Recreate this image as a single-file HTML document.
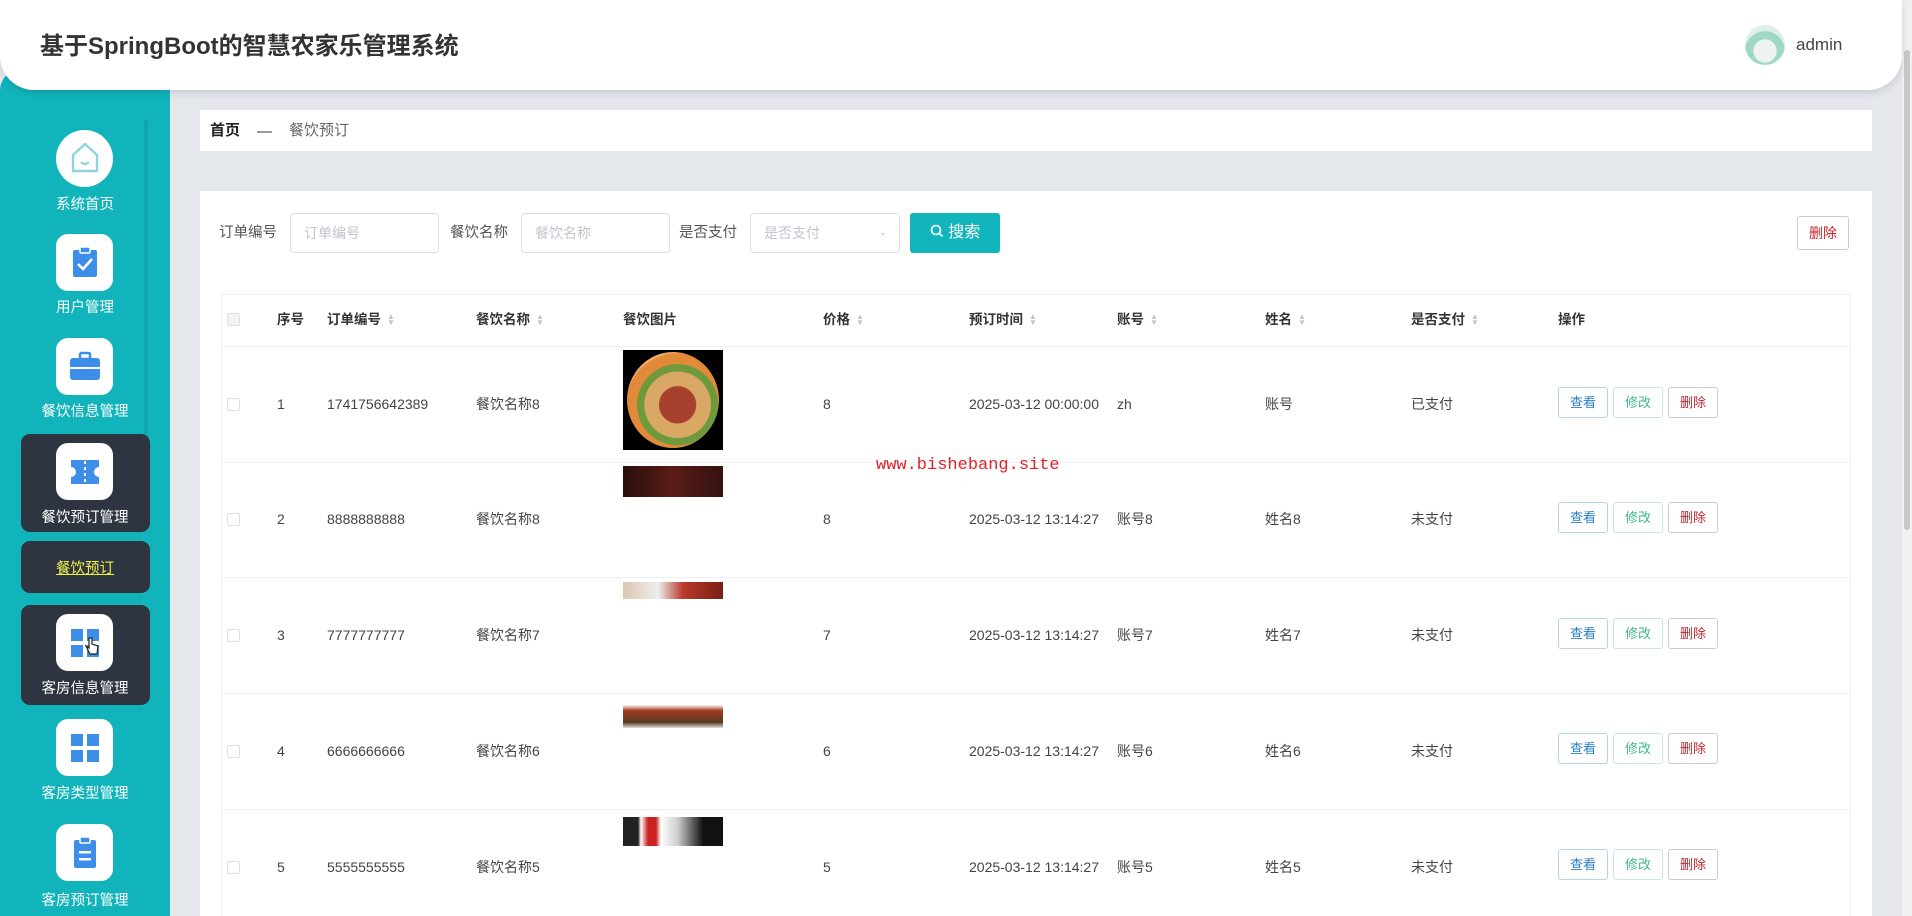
<!DOCTYPE html>
<html><head><meta charset="utf-8">
<style>
*{margin:0;padding:0;box-sizing:border-box}
body{width:1912px;height:916px;overflow:hidden;background:#e4e8ec;font-family:"Liberation Sans","Noto Sans CJK SC",sans-serif;color:#333;position:relative}
.abs{position:absolute}
#hdr{left:0;top:0;width:1902px;height:90px;background:#fff;border-radius:0 0 34px 34px;box-shadow:0 3px 8px rgba(0,0,0,.12);z-index:3}
#side{left:0;top:70px;width:170px;height:846px;background:#12b4bc;border-top-left-radius:20px}
.sb{position:absolute;right:0;top:0;width:10px;height:916px;background:#f0f0f0}
.ic{position:absolute;left:36px;width:57px;height:57px;background:#fff;border-radius:12px}
.dark{position:absolute;left:21px;width:129px;background:#2e3440;border-radius:9px}
.lab{position:absolute;left:0;width:170px;text-align:center;color:#fff;font-size:14.5px;line-height:20px}
.box{background:#fff}
.inp{position:absolute;top:213px;height:40px;border:1px solid #dcdfe6;border-radius:4px;background:#fff;color:#c0c4cc;font-size:14px;line-height:38px;padding-left:13px}
.lbl{position:absolute;top:223px;font-size:14.5px;color:#555;line-height:20px}
.hd{position:absolute;top:310px;font-size:13.5px;font-weight:bold;color:#333;line-height:20px}
.sort{display:inline-block;margin-left:6px;vertical-align:middle;color:#c0c4cc;font-size:8px;line-height:6px}
.cell{position:absolute;font-size:14px;color:#444;line-height:20px}
.btn{position:absolute;height:31px;width:50px;border:1px solid #ccc;border-radius:3px;font-size:13px;text-align:center;line-height:29px;background:#fff}
.cb{position:absolute;left:227px;width:13px;height:13px;border:1px solid #dcdfe6;border-radius:2px}
.rowline{position:absolute;left:221px;width:1630px;height:1px;background:#eef0f3}
</style></head><body>
<div id="hdr" class="abs">
  <div class="abs" style="left:40px;top:31px;font-size:24px;font-weight:bold;color:#333;line-height:32px">基于SpringBoot的智慧农家乐管理系统</div>
  <div class="abs" style="left:1745px;top:25px;width:40px;height:40px;border-radius:50%;background:radial-gradient(circle at 50% 65%,#eef3f1 0 35%,#9fd9c5 36% 60%,#dfeee8 61%)"></div>
  <div class="abs" style="left:1796px;top:35px;font-size:17px;color:#444;line-height:20px">admin</div>
</div>
<div class="sb"></div>
<div class="abs" style="right:2px;top:50px;width:6px;height:480px;background:#c8c8c8;border-radius:3px"></div>

<div id="side" class="abs"></div>
<div class="abs" style="left:144px;top:120px;width:4px;height:355px;background:rgba(0,0,0,.08);border-radius:2px"></div>
<div class="abs" style="left:56px;top:130px;width:57px;height:57px;border-radius:50%;background:#fff"></div>
<svg class="abs" style="left:68px;top:140px" width="34" height="36" viewBox="0 0 34 36"><path d="M5 15 L17 4 L29 15 V31 H5 Z" fill="none" stroke="#8fd3dc" stroke-width="2.4" stroke-linejoin="round"/><path d="M13 22 q4 4 8 0" fill="none" stroke="#8fd3dc" stroke-width="2.2"/></svg>
<div class="lab" style="top:195px">系统首页</div>

<div class="ic" style="top:234px;left:56px"></div>
<svg class="abs" style="left:70px;top:245px" width="30" height="34" viewBox="0 0 30 34"><rect x="3" y="5" width="24" height="27" rx="2" fill="#3d8ee8"/><rect x="10" y="2" width="10" height="6" rx="1" fill="#3d8ee8" stroke="#fff" stroke-width="1.5"/><path d="M8 19 l5 5 l9 -10" fill="none" stroke="#fff" stroke-width="2.6"/></svg>
<div class="lab" style="top:298px">用户管理</div>

<div class="ic" style="top:338px;left:56px"></div>
<svg class="abs" style="left:68px;top:350px" width="34" height="32" viewBox="0 0 34 32"><rect x="12" y="3" width="10" height="6" rx="1.5" fill="none" stroke="#3d8ee8" stroke-width="2.5"/><rect x="2" y="8" width="30" height="22" rx="3" fill="#3d8ee8"/><rect x="2" y="17" width="30" height="2" fill="#fff"/></svg>
<div class="lab" style="top:402px">餐饮信息管理</div>

<div class="dark" style="top:434px;height:98px"></div>
<div class="ic" style="top:443px;left:56px"></div>
<svg class="abs" style="left:68px;top:457px" width="34" height="30" viewBox="0 0 34 30"><path d="M3 3 H31 V10 a5 5 0 0 0 0 10 V27 H3 V20 a5 5 0 0 0 0 -10 Z" fill="#3d8ee8"/><path d="M17 4 V26" stroke="#fff" stroke-width="2" stroke-dasharray="3 3"/></svg>
<div class="lab" style="top:508px">餐饮预订管理</div>

<div class="dark" style="top:541px;height:52px"></div>
<div class="lab" style="top:559px;color:#f2f24a;text-decoration:underline">餐饮预订</div>

<div class="dark" style="top:605px;height:100px"></div>
<div class="ic" style="top:614px;left:56px"></div>
<svg class="abs" style="left:70px;top:628px" width="30" height="30" viewBox="0 0 30 30"><rect x="1" y="1" width="12" height="12" fill="#3d8ee8"/><rect x="17" y="1" width="12" height="12" fill="#3d8ee8"/><rect x="1" y="17" width="12" height="12" fill="#3d8ee8"/><rect x="17" y="17" width="12" height="12" fill="#3d8ee8"/><path d="M19 10 v10 l-3 -2 l4 8 h7 l1 -8 l-6 -2 v-6 z" fill="#fff" stroke="#222" stroke-width="1.2"/></svg>
<div class="lab" style="top:679px">客房信息管理</div>

<div class="ic" style="top:719px;left:56px"></div>
<svg class="abs" style="left:70px;top:733px" width="30" height="30" viewBox="0 0 30 30"><rect x="1" y="1" width="12" height="12" fill="#3d8ee8"/><rect x="17" y="1" width="12" height="12" fill="#3d8ee8"/><rect x="1" y="17" width="12" height="12" fill="#3d8ee8"/><rect x="17" y="17" width="12" height="12" fill="#3d8ee8"/></svg>
<div class="lab" style="top:784px">客房类型管理</div>

<div class="ic" style="top:824px;left:56px"></div>
<svg class="abs" style="left:72px;top:836px" width="26" height="34" viewBox="0 0 26 34"><rect x="2" y="4" width="22" height="28" rx="2" fill="#3d8ee8"/><rect x="8" y="1" width="10" height="6" rx="1" fill="#3d8ee8" stroke="#fff" stroke-width="1.5"/><rect x="7" y="15" width="12" height="2.5" fill="#fff"/><rect x="7" y="22" width="12" height="2.5" fill="#fff"/></svg>
<div class="lab" style="top:891px">客房预订管理</div>

<div class="abs box" style="left:200px;top:110px;width:1672px;height:41px"></div>
<div class="abs" style="left:210px;top:121px;font-size:15px;font-weight:bold;color:#222;line-height:20px">首页</div>
<div class="abs" style="left:257px;top:121px;font-size:15px;color:#333;line-height:22px">—</div>
<div class="abs" style="left:289px;top:121px;font-size:15px;color:#666;line-height:20px">餐饮预订</div>

<div class="abs box" style="left:200px;top:191px;width:1672px;height:725px"></div>
<div class="lbl" style="left:219px">订单编号</div>
<div class="inp" style="left:290px;width:149px">订单编号</div>
<div class="lbl" style="left:450px">餐饮名称</div>
<div class="inp" style="left:521px;width:149px">餐饮名称</div>
<div class="lbl" style="left:679px">是否支付</div>
<div class="inp" style="left:750px;width:150px">是否支付<span style="position:absolute;right:12px;font-size:10px">⌄</span></div>
<div class="abs" style="left:910px;top:213px;width:90px;height:40px;background:#13b5bd;border-radius:3px;color:#fff;font-size:16px;line-height:40px;text-align:center">
<svg width="14" height="14" viewBox="0 0 14 14" style="vertical-align:-1px"><circle cx="6" cy="6" r="4.5" fill="none" stroke="#fff" stroke-width="1.6"/><path d="M9.5 9.5 L12.5 12.5" stroke="#fff" stroke-width="1.6"/></svg> 搜索</div>
<div class="btn" style="left:1797px;top:216px;width:52px;height:34px;line-height:32px;color:#c0262d;border-color:#ccc;font-size:14px">删除</div>

<div class="abs" style="left:221px;top:294px;width:1630px;height:622px;border:1px solid #eef0f3;border-bottom:none"></div>
<div class="cb" style="top:313px;background:#f2f2f2"></div>
<div class="hd" style="left:277px">序号</div>
<div class="hd" style="left:327px">订单编号<span class="sort">▲<br>▼</span></div>
<div class="hd" style="left:476px">餐饮名称<span class="sort">▲<br>▼</span></div>
<div class="hd" style="left:623px">餐饮图片</div>
<div class="hd" style="left:823px">价格<span class="sort">▲<br>▼</span></div>
<div class="hd" style="left:969px">预订时间<span class="sort">▲<br>▼</span></div>
<div class="hd" style="left:1117px">账号<span class="sort">▲<br>▼</span></div>
<div class="hd" style="left:1265px">姓名<span class="sort">▲<br>▼</span></div>
<div class="hd" style="left:1411px">是否支付<span class="sort">▲<br>▼</span></div>
<div class="hd" style="left:1558px">操作</div>
<div class="rowline" style="top:346px"></div>
<div class="rowline" style="top:462px"></div>
<div class="rowline" style="top:577px"></div>
<div class="rowline" style="top:693px"></div>
<div class="rowline" style="top:809px"></div>

<div class="abs" style="left:623px;top:350px;width:100px;height:100px;background:#000"><div style="position:absolute;left:4px;top:2px;width:92px;height:96px;border-radius:50%;background:radial-gradient(circle at 55% 55%,#a8402e 0 25%,#d9a865 26% 45%,#6f9a3c 46% 55%,#e08a3a 56% 70%,#f2a86b 71%)"></div></div>
<div class="abs" style="left:623px;top:466px;width:100px;height:31px;background:linear-gradient(90deg,#2a0e0b,#5a1d16 50%,#341210)"></div>
<div class="abs" style="left:623px;top:582px;width:100px;height:17px;background:linear-gradient(90deg,#d9c7b0,#eee 35%,#b83a2a 60%,#7a1e15)"></div>
<div class="abs" style="left:623px;top:699px;width:100px;height:29px;background:linear-gradient(180deg,#fff 0 20%,#a33a20 40%,#5a3a22 80%,#ddd)"></div>
<div class="abs" style="left:623px;top:817px;width:100px;height:29px;background:linear-gradient(90deg,#222 0 15%,#fff 18%,#c22 25% 33%,#fff 38%,#ccc 55%,#111 80%)"></div>

<div class="cb" style="top:398px"></div><div class="cell" style="left:277px;top:394px">1</div><div class="cell" style="left:327px;top:394px">1741756642389</div><div class="cell" style="left:476px;top:394px">餐饮名称8</div><div class="cell" style="left:823px;top:394px">8</div><div class="cell" style="left:969px;top:394px">2025-03-12 00:00:00</div><div class="cell" style="left:1117px;top:394px">zh</div><div class="cell" style="left:1265px;top:394px">账号</div><div class="cell" style="left:1411px;top:394px">已支付</div>
<div class="cb" style="top:513px"></div><div class="cell" style="left:277px;top:509px">2</div><div class="cell" style="left:327px;top:509px">8888888888</div><div class="cell" style="left:476px;top:509px">餐饮名称8</div><div class="cell" style="left:823px;top:509px">8</div><div class="cell" style="left:969px;top:509px">2025-03-12 13:14:27</div><div class="cell" style="left:1117px;top:509px">账号8</div><div class="cell" style="left:1265px;top:509px">姓名8</div><div class="cell" style="left:1411px;top:509px">未支付</div>
<div class="cb" style="top:629px"></div><div class="cell" style="left:277px;top:625px">3</div><div class="cell" style="left:327px;top:625px">7777777777</div><div class="cell" style="left:476px;top:625px">餐饮名称7</div><div class="cell" style="left:823px;top:625px">7</div><div class="cell" style="left:969px;top:625px">2025-03-12 13:14:27</div><div class="cell" style="left:1117px;top:625px">账号7</div><div class="cell" style="left:1265px;top:625px">姓名7</div><div class="cell" style="left:1411px;top:625px">未支付</div>
<div class="cb" style="top:745px"></div><div class="cell" style="left:277px;top:741px">4</div><div class="cell" style="left:327px;top:741px">6666666666</div><div class="cell" style="left:476px;top:741px">餐饮名称6</div><div class="cell" style="left:823px;top:741px">6</div><div class="cell" style="left:969px;top:741px">2025-03-12 13:14:27</div><div class="cell" style="left:1117px;top:741px">账号6</div><div class="cell" style="left:1265px;top:741px">姓名6</div><div class="cell" style="left:1411px;top:741px">未支付</div>
<div class="cb" style="top:861px"></div><div class="cell" style="left:277px;top:857px">5</div><div class="cell" style="left:327px;top:857px">5555555555</div><div class="cell" style="left:476px;top:857px">餐饮名称5</div><div class="cell" style="left:823px;top:857px">5</div><div class="cell" style="left:969px;top:857px">2025-03-12 13:14:27</div><div class="cell" style="left:1117px;top:857px">账号5</div><div class="cell" style="left:1265px;top:857px">姓名5</div><div class="cell" style="left:1411px;top:857px">未支付</div>

<div class="btn" style="left:1558px;top:387px;color:#2a7fc4;border-color:#b8d4e8">查看</div><div class="btn" style="left:1613px;top:387px;color:#3fb98a;border-color:#cce8dc">修改</div><div class="btn" style="left:1668px;top:387px;color:#c0262d;border-color:#ccc">删除</div>
<div class="btn" style="left:1558px;top:502px;color:#2a7fc4;border-color:#b8d4e8">查看</div><div class="btn" style="left:1613px;top:502px;color:#3fb98a;border-color:#cce8dc">修改</div><div class="btn" style="left:1668px;top:502px;color:#c0262d;border-color:#ccc">删除</div>
<div class="btn" style="left:1558px;top:618px;color:#2a7fc4;border-color:#b8d4e8">查看</div><div class="btn" style="left:1613px;top:618px;color:#3fb98a;border-color:#cce8dc">修改</div><div class="btn" style="left:1668px;top:618px;color:#c0262d;border-color:#ccc">删除</div>
<div class="btn" style="left:1558px;top:733px;color:#2a7fc4;border-color:#b8d4e8">查看</div><div class="btn" style="left:1613px;top:733px;color:#3fb98a;border-color:#cce8dc">修改</div><div class="btn" style="left:1668px;top:733px;color:#c0262d;border-color:#ccc">删除</div>
<div class="btn" style="left:1558px;top:849px;color:#2a7fc4;border-color:#b8d4e8">查看</div><div class="btn" style="left:1613px;top:849px;color:#3fb98a;border-color:#cce8dc">修改</div><div class="btn" style="left:1668px;top:849px;color:#c0262d;border-color:#ccc">删除</div>

<div class="abs" style="left:876px;top:456px;font-family:'Liberation Mono',monospace;font-size:17px;color:#e0232a;line-height:20px">www.bishebang.site</div>
</body></html>
